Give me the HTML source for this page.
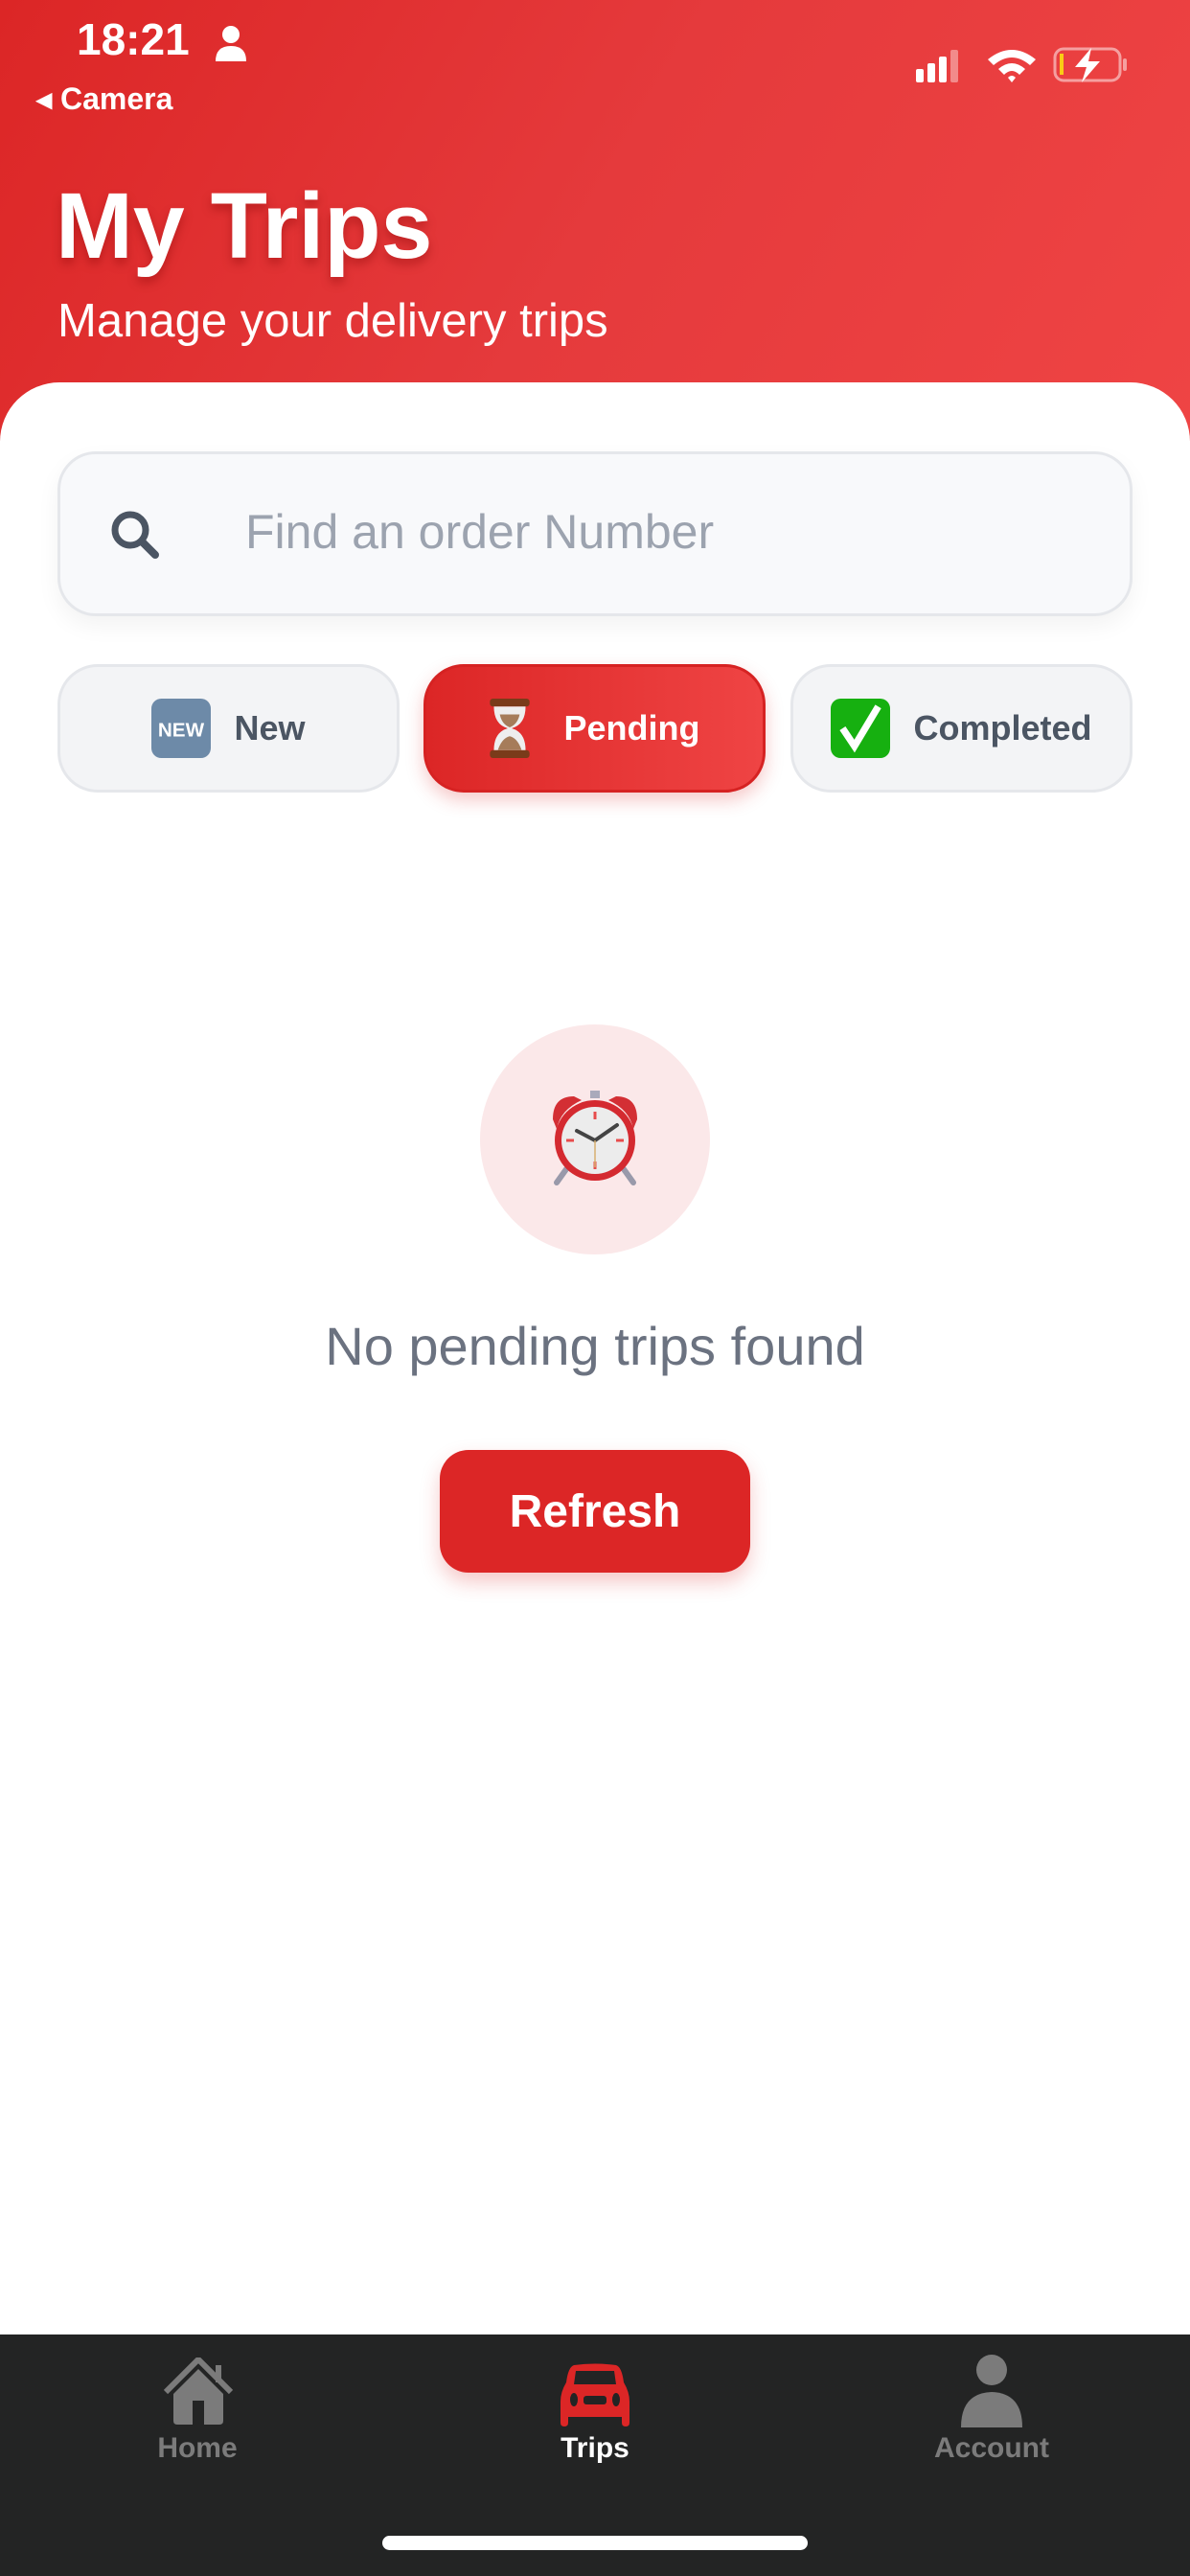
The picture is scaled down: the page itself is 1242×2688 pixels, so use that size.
<!DOCTYPE html>
<html><head><meta charset="utf-8"><style>
*{margin:0;padding:0;box-sizing:border-box}
body{width:1242px;height:2688px;position:relative;overflow:hidden;background:#fff;font-family:"Liberation Sans",sans-serif}
.hdr{position:absolute;left:0;top:0;width:1242px;height:460px;background:linear-gradient(120deg,#dc2626 0%,#e53a3c 50%,#ef4444 100%)}
.card{position:absolute;left:0;top:399px;width:1242px;height:2037px;background:#fff;border-radius:62px 62px 0 0}
.abs{position:absolute}
.tab{position:absolute;top:693px;height:134px;width:357px;border-radius:42px;background:#f3f4f6;border:3px solid #e5e7eb;display:flex;align-items:center;justify-content:center;font-weight:bold;font-size:36px;color:#4b5563}
.nav{position:absolute;left:0;top:2436px;width:1242px;height:252px;background:#232424}
.lbl{position:absolute;top:2538px;font-weight:bold;font-size:30px;color:#7b7b7b;text-align:center;width:240px}
</style></head><body>
<div class="hdr"></div>
<div class="abs" style="left:80px;top:14px;font-size:46px;font-weight:bold;color:#fff">18:21</div>
<svg class="abs" style="left:224px;top:26px" width="34" height="40" viewBox="0 0 34 40"><circle cx="17" cy="10" r="9" fill="#fff"/><path d="M1 38 Q1 22 17 22 Q33 22 33 38Z" fill="#fff"/></svg>
<div class="abs" style="left:38px;top:84px;font-size:32px;font-weight:bold;color:#fff">◂ Camera</div>
<svg class="abs" style="left:956px;top:48px" width="230" height="40" viewBox="0 0 230 40">
<rect x="0" y="24" width="8" height="14" rx="2" fill="#fff"/><rect x="12" y="18" width="8" height="20" rx="2" fill="#fff"/><rect x="24" y="11" width="8" height="27" rx="2" fill="#fff"/><rect x="36" y="4" width="8" height="34" rx="2" fill="#fff" opacity=".4"/>
<path d="M75 14 Q100 -6 125 14 L119 20 Q100 4 81 20Z M86 24 Q100 12 114 24 L108 30 Q100 22 92 30Z M96 33 L100 38 L104 33 Q100 29 96 33Z" fill="#fff"/>
<rect x="145" y="3" width="68" height="33" rx="9" fill="none" stroke="#fff" stroke-opacity=".5" stroke-width="3"/><rect x="216" y="13" width="4" height="13" rx="2" fill="#fff" opacity=".5"/>
<rect x="150" y="8" width="4" height="22" fill="#facc15"/>
<path d="M183 2 L166 22 L178 22 L173 38 L192 16 L180 16Z" fill="#fff"/>
</svg>
<div class="abs" style="left:58px;top:180px;font-size:97px;font-weight:bold;color:#fff;text-shadow:0 6px 10px rgba(120,0,0,.35)">My Trips</div>
<div class="abs" style="left:60px;top:307px;font-size:49px;color:#fff">Manage your delivery trips</div>
<div class="card"></div>
<div class="abs" style="left:60px;top:471px;width:1122px;height:172px;border-radius:40px;background:#f8f9fb;border:3px solid #e5e7eb;box-shadow:0 10px 24px rgba(0,0,0,.05)"></div>
<svg class="abs" style="left:114px;top:531px" width="54" height="54" viewBox="0 0 54 54"><circle cx="22" cy="22" r="16" fill="none" stroke="#4b5563" stroke-width="7"/><path d="M34 34 L48 48" stroke="#4b5563" stroke-width="8" stroke-linecap="round"/></svg>
<div class="abs" style="left:256px;top:526px;font-size:50px;color:#9ca3af">Find an order Number</div>
<div class="tab" style="left:60px"><svg width="62" height="62" viewBox="0 0 60 60" style="margin-right:24px"><rect width="60" height="60" rx="10" fill="#6d8aa8"/><text x="30" y="38" font-size="20" font-family="Liberation Sans" font-weight="bold" fill="#fff" text-anchor="middle">NEW</text></svg>New</div>
<div class="tab" style="left:442px;background:linear-gradient(90deg,#dc2626,#ef4444);border-color:#d62222;color:#fff;box-shadow:0 8px 18px rgba(220,38,38,.25)"><svg width="42" height="62" viewBox="0 0 40 60" style="margin-right:36px"><rect x="0" y="0" width="40" height="8" rx="3" fill="#7a3b1a"/><rect x="0" y="52" width="40" height="8" rx="3" fill="#7a3b1a"/><path d="M4 8 Q4 26 18 30 Q4 34 4 52 L36 52 Q36 34 22 30 Q36 26 36 8Z" fill="#eee"/><path d="M10 16 L30 16 Q28 26 20 29 Q12 26 10 16Z M8 52 Q12 40 20 38 Q28 40 32 52Z" fill="#a67c5a"/></svg>Pending</div>
<div class="tab" style="left:825px"><svg width="62" height="62" viewBox="0 0 60 60" style="margin-right:24px"><rect width="60" height="60" rx="10" fill="#16b010"/><path d="M12 30 L24 48 L48 8" fill="none" stroke="#fff" stroke-width="7"/></svg>Completed</div>
<div class="abs" style="left:501px;top:1069px;width:240px;height:240px;border-radius:50%;background:#fbe8e9"></div>
<svg class="abs" style="left:571px;top:1138px" width="100" height="100" viewBox="0 0 100 100">
<path d="M6 30 Q6 6 28 6 L36 10 Q14 20 10 40Z" fill="#d32f34"/><path d="M94 30 Q94 6 72 6 L64 10 Q86 20 90 40Z" fill="#d32f34"/>
<rect x="45" y="0" width="10" height="8" fill="#aab"/>
<path d="M20 82 L10 96 M80 82 L90 96" stroke="#99a" stroke-width="6" stroke-linecap="round"/>
<circle cx="50" cy="52" r="42" fill="#d42a30"/><circle cx="50" cy="52" r="35" fill="#ececec"/>
<path d="M50 22V30 M50 74V82 M20 52H28 M72 52H80" stroke="#e74c4c" stroke-width="3"/>
<path d="M50 52 L31 42 M50 52 L73 36" stroke="#444" stroke-width="4" stroke-linecap="round"/><path d="M50 52 V80" stroke="#d8b070" stroke-width="1.5"/>
</svg>
<div class="abs" style="left:0;top:1372px;width:1242px;text-align:center;font-size:56px;color:#6b7280">No pending trips found</div>
<div class="abs" style="left:459px;top:1513px;width:324px;height:128px;border-radius:30px;background:#dc2626;box-shadow:0 10px 20px rgba(220,38,38,.25);color:#fff;font-weight:bold;font-size:48px;display:flex;align-items:center;justify-content:center">Refresh</div>
<div class="nav"></div>
<svg class="abs" style="left:171px;top:2460px" width="72" height="70" viewBox="0 0 72 70"><path d="M2 36 L36 2 L70 36" fill="none" stroke="#7b7b7b" stroke-width="6" stroke-linejoin="round"/><rect x="54" y="8" width="6" height="18" fill="#7b7b7b"/><path d="M10 38 L36 12 L62 38 V66 Q62 70 58 70 H14 Q10 70 10 66Z" fill="#7b7b7b"/><rect x="30" y="45" width="12" height="25" fill="#232424"/></svg>
<svg class="abs" style="left:585px;top:2466px" width="72" height="66" viewBox="0 0 72 66"><path d="M14 2 Q36 -1 58 2 Q64 4 66 20 Q72 30 72 40 V62 Q72 66 68 66 Q64 66 64 62 V56 H8 V62 Q8 66 4 66 Q0 66 0 62 V40 Q0 30 6 20 Q8 4 14 2Z" fill="#dc2626"/><path d="M16 8 H56 L58 22 H14Z" fill="#232424"/><ellipse cx="14" cy="38" rx="4" ry="7" fill="#232424"/><ellipse cx="58" cy="38" rx="4" ry="7" fill="#232424"/><rect x="24" y="34" width="24" height="9" rx="3" fill="#232424"/></svg>
<svg class="abs" style="left:1002px;top:2457px" width="66" height="76" viewBox="0 0 66 76"><ellipse cx="33" cy="16" rx="16" ry="16" fill="#7b7b7b"/><path d="M1 76 Q1 40 33 39 Q65 40 65 76Z" fill="#7b7b7b"/></svg>
<div class="lbl" style="left:86px">Home</div>
<div class="lbl" style="left:501px;color:#fff">Trips</div>
<div class="lbl" style="left:915px">Account</div>
<div class="abs" style="left:399px;top:2646px;width:444px;height:15px;border-radius:8px;background:#fff"></div>
</body></html>
